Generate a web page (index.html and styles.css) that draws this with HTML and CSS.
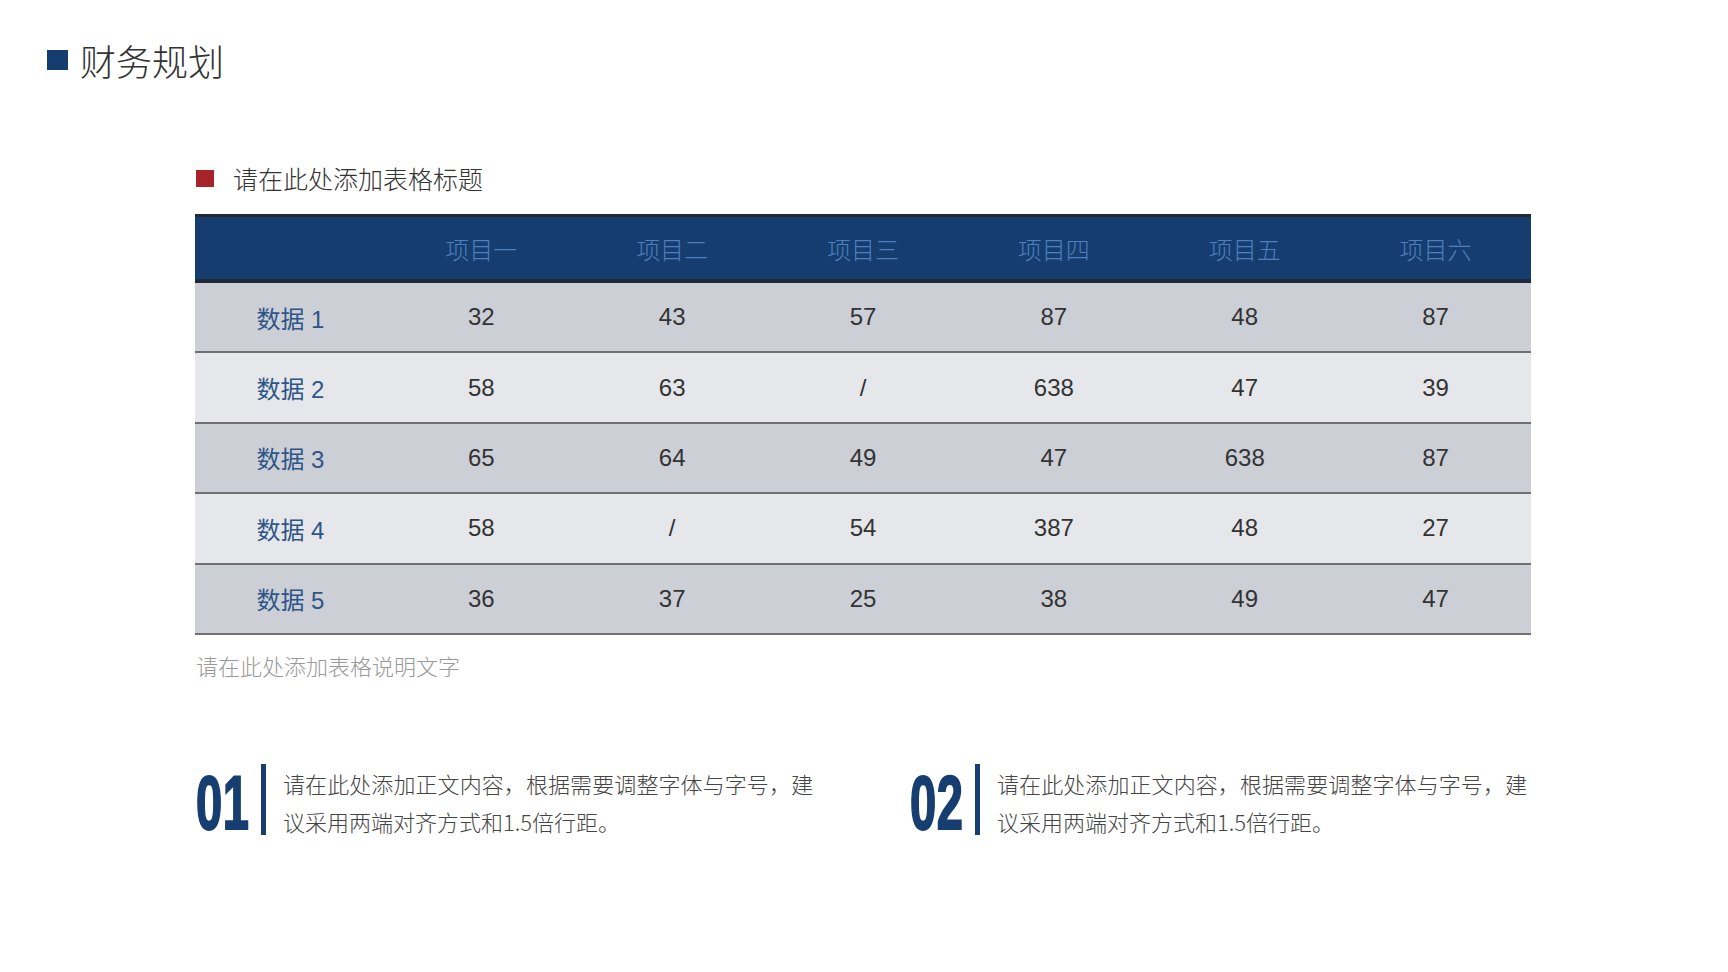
FILE: index.html
```html
<!DOCTYPE html>
<html lang="zh-CN">
<head>
<meta charset="utf-8">
<title>财务规划</title>
<link rel="stylesheet" href="styles.css">
</head>
<body>
<header class="page-title">
  <span class="title-mark"></span>
  <h1 class="title-text">财务规划</h1>
</header>
<main class="content">
  <div class="table-title">
    <span class="table-mark"></span>
    <span>请在此处添加表格标题</span>
  </div>
  <div class="data-table">
    <div class="row head">
      <div class="cell"></div>
      <div class="cell">项目一</div>
      <div class="cell">项目二</div>
      <div class="cell">项目三</div>
      <div class="cell">项目四</div>
      <div class="cell">项目五</div>
      <div class="cell">项目六</div>
    </div>
    <div class="row dark">
      <div class="cell label">数据 1</div>
      <div class="cell">32</div><div class="cell">43</div><div class="cell">57</div><div class="cell">87</div><div class="cell">48</div><div class="cell">87</div>
    </div>
    <div class="row light">
      <div class="cell label">数据 2</div>
      <div class="cell">58</div><div class="cell">63</div><div class="cell">/</div><div class="cell">638</div><div class="cell">47</div><div class="cell">39</div>
    </div>
    <div class="row dark">
      <div class="cell label">数据 3</div>
      <div class="cell">65</div><div class="cell">64</div><div class="cell">49</div><div class="cell">47</div><div class="cell">638</div><div class="cell">87</div>
    </div>
    <div class="row light">
      <div class="cell label">数据 4</div>
      <div class="cell">58</div><div class="cell">/</div><div class="cell">54</div><div class="cell">387</div><div class="cell">48</div><div class="cell">27</div>
    </div>
    <div class="row dark">
      <div class="cell label">数据 5</div>
      <div class="cell">36</div><div class="cell">37</div><div class="cell">25</div><div class="cell">38</div><div class="cell">49</div><div class="cell">47</div>
    </div>
  </div>
  <p class="caption">请在此处添加表格说明文字</p>
  <section class="notes">
    <div class="note">
      <div class="note-num"><span>01</span></div>
      <div class="note-bar"></div>
      <p class="note-text">请在此处添加正文内容，根据需要调整字体与字号，建议采用两端对齐方式和1.5倍行距。</p>
    </div>
    <div class="note">
      <div class="note-num"><span>02</span></div>
      <div class="note-bar"></div>
      <p class="note-text">请在此处添加正文内容，根据需要调整字体与字号，建议采用两端对齐方式和1.5倍行距。</p>
    </div>
  </section>
</main>
</body>
</html>
```
FILE: styles.css
```css
* { box-sizing: border-box; }
html, body { margin: 0; padding: 0; background: #ffffff; }
body {
  width: 1728px;
  height: 972px;
  overflow: hidden;
  font-family: "Noto Sans CJK SC", "Liberation Sans", sans-serif;
  color: #333333;
}

.page-title {
  display: flex;
  align-items: center;
  margin-top: 40px;
  padding-left: 47px;
  height: 40px;
}
.title-mark {
  width: 21px;
  height: 20px;
  background: #163d6f;
  margin-right: 12px;
}
.title-text {
  margin: 0;
  font-size: 36px;
  line-height: 40px;
  font-weight: 300;
  color: #333333;
}

.content {
  padding-left: 195px;
  width: 1531px;
}

.table-title {
  display: flex;
  align-items: center;
  margin-top: 83px;
  height: 30px;
  font-size: 25px;
  font-weight: 300;
  color: #333333;
}
.table-mark {
  width: 18px;
  height: 17px;
  background: #a82329;
  margin-left: 1px;
  margin-right: 19px;
}

.data-table {
  margin-top: 21px;
  width: 1336px;
  font-family: "Liberation Sans", "Noto Sans CJK SC", sans-serif;
  font-size: 24px;
}
.row {
  display: grid;
  grid-template-columns: repeat(7, 1fr);
  align-items: center;
  text-align: center;
}
.row.head {
  height: 69px;
  background: #153d6f;
  border-top: 3px solid #25282e;
  border-bottom: 4px solid #1d2a3a;
  color: #4f7fbe;
  font-family: "Noto Sans CJK SC", sans-serif;
  font-weight: 300;
}
.row.dark, .row.light {
  height: 70.4px;
  border-bottom: 2px solid #6f7074;
  color: #333333;
}
.row.dark { background: #cccfd6; }
.row.light { background: #e6e7ea; }
.cell.label { color: #2e5587; }

.caption {
  margin: 15px 0 0 1px;
  height: 30px;
  line-height: 30px;
  font-size: 22px;
  font-weight: 300;
  color: #999999;
}

.notes {
  display: flex;
  gap: 96px;
  margin-top: 84px;
}
.note {
  display: flex;
  align-items: flex-start;
  width: 618px;
}
.note-num {
  width: 66px;
  height: 78px;
  margin-top: 1px;
  padding-left: 1px;
  overflow: visible;
}
.note-num span {
  display: inline-block;
  font-family: "Liberation Sans", sans-serif;
  font-weight: 700;
  font-size: 76px;
  line-height: 1;
  color: #163e70;
  -webkit-text-stroke: 2px #163e70;
  letter-spacing: 1px;
  transform: scaleX(0.62);
  transform-origin: left top;
}
.note-bar {
  width: 5px;
  height: 71px;
  background: #163e70;
  flex: none;
}
.note-text {
  margin: 0 0 0 17px;
  width: 530px;
  font-size: 22px;
  line-height: 38px;
  font-weight: 300;
  color: #454545;
  text-align: justify;
}
```
